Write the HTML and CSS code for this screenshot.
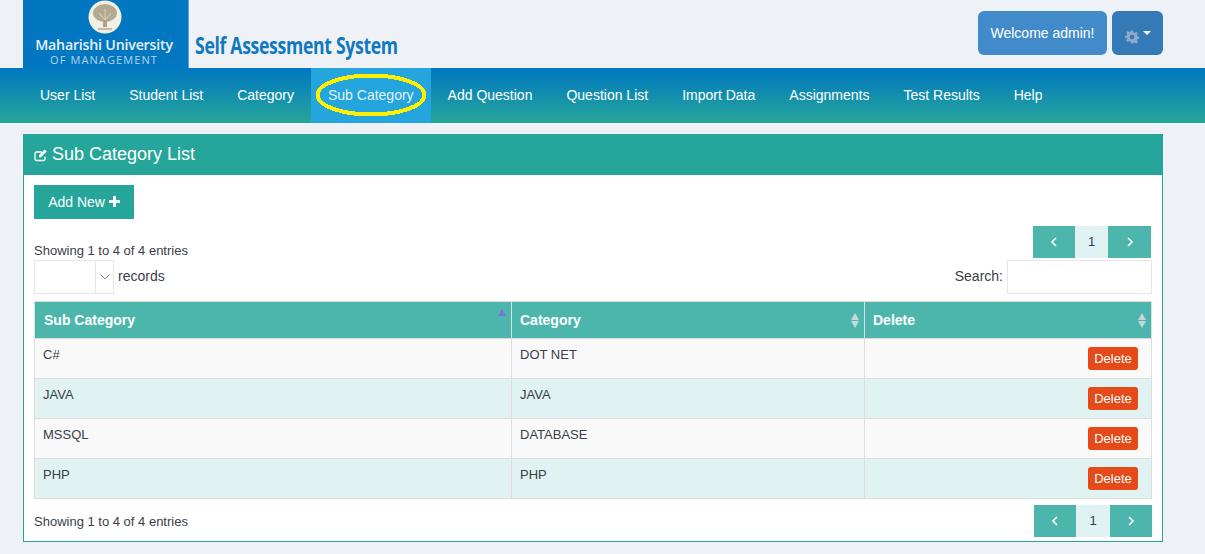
FILE: index.html
```html
<!DOCTYPE html>
<html lang="en">
<head>
<meta charset="utf-8">
<title>Sub Category List</title>
<link rel="stylesheet" href="styles.css">
</head>
<body>
<header class="topbar">
  <div class="brand">
    <div class="logo">
      <svg class="seal" width="34" height="34" viewBox="0 0 34 34">
        <circle cx="17" cy="17" r="16.5" fill="#f3efe4"/>
        <ellipse cx="17" cy="13" rx="12" ry="9" fill="#b3aa92"/>
        <path d="M15.5 19h3l.6 8h-4.200z" fill="#a89f88"/>
        <path d="M10 29h14" stroke="#b3aa92" stroke-width="1.500"/>
        <path d="M17 20 11 13M17 20l6-7M17 20V9" stroke="#e3decf" stroke-width=".8" fill="none"/>
      </svg>
      <div class="logo-name">Maharishi University</div>
      <div class="logo-sub">OF MANAGEMENT</div>
    </div>
    <div class="system-title">Self Assessment System</div>
  </div>
  <div class="user-actions">
    <div class="welcome">Welcome admin!</div>
    <div class="settings">
      <svg class="gear" width="14" height="14" viewBox="0 0 24 24"><path fill="#8fa9c6" d="M10 1h4l.6 3.200 2 .8 2.700-1.800 2.800 2.800-1.800 2.700.8 2 3.200.6v4l-3.200.6-.8 2 1.800 2.700-2.800 2.800-2.700-1.800-2 .8L14 23h-4l-.6-3.200-2-.8-2.700 1.800-2.800-2.800 1.800-2.700-.8-2L-.3 14v-4l3.200-.6.8-2-1.800-2.700 2.800-2.800 2.700 1.800 2-.8zM12 8a4 4 0 1 0 0 8 4 4 0 0 0 0-8z"/></svg>
      <span class="caret"></span>
    </div>
  </div>
</header>

<nav class="nav">
  <a class="nav-item">User List</a>
  <a class="nav-item">Student List</a>
  <a class="nav-item">Category</a>
  <a class="nav-item active">Sub Category
    <svg class="highlight" width="114" height="46" viewBox="0 0 114 46"><ellipse cx="57" cy="23" rx="53.500" ry="19.500" fill="none" stroke="#ffef00" stroke-width="4" shape-rendering="crispEdges"/></svg>
  </a>
  <a class="nav-item">Add Question</a>
  <a class="nav-item">Question List</a>
  <a class="nav-item">Import Data</a>
  <a class="nav-item">Assignments</a>
  <a class="nav-item">Test Results</a>
  <a class="nav-item">Help</a>
</nav>

<main class="panel">
  <h1 class="panel-head">
    <svg class="edit-icon" width="14" height="14" viewBox="0 0 14 14"><path d="M11 8.500V11a1.500 1.500 0 0 1-1.500 1.500h-7A1.500 1.500 0 0 1 1 11V5.500A1.500 1.500 0 0 1 2.500 4H8" fill="none" stroke="#fff" stroke-width="1.300"/><path d="M5 7.200 10.800 1.500l2 2L7 9.200H5z" fill="#fff"/></svg>
    Sub Category List
  </h1>
  <div class="panel-body">
    <button class="add-btn">Add New <svg width="11" height="11" viewBox="0 0 11 11"><path d="M4 0h3v4h4v3H7v4H4V7H0V4h4z" fill="#fff"/></svg></button>

    <div class="controls-top">
      <div class="info">Showing 1 to 4 of 4 entries</div>
      <div class="pager">
        <span class="pg-arrow"><svg width="8" height="10" viewBox="0 0 8 10"><path d="M6 1 2 5l4 4" fill="none" stroke="#fff" stroke-width="1.600"/></svg></span>
        <span class="pg-num">1</span>
        <span class="pg-arrow pg-wide"><svg width="8" height="10" viewBox="0 0 8 10"><path d="m2 1 4 4-4 4" fill="none" stroke="#fff" stroke-width="1.600"/></svg></span>
      </div>
    </div>

    <div class="controls-mid">
      <div class="length">
        <div class="select">
          <span class="select-val"></span>
          <span class="select-arrow"><svg width="10" height="6" viewBox="0 0 10 6"><path d="m.5 .5 4.500 4.500 4.500-4.500" fill="none" stroke="#888" stroke-width="1"/></svg></span>
        </div>
        <span class="field-label">records</span>
      </div>
      <label class="search"><span class="field-label">Search:</span> <span class="search-box"></span></label>
    </div>

    <table class="grid">
      <colgroup><col class="c1"><col class="c2"><col class="c3"></colgroup>
      <thead>
        <tr>
          <th class="th-first"><span class="th-in">Sub Category<span class="sort-asc"></span></span></th>
          <th><span class="th-in">Category<span class="sort"></span></span></th>
          <th><span class="th-in">Delete<span class="sort"></span></span></th>
        </tr>
      </thead>
      <tbody>
        <tr><td>C#</td><td>DOT NET</td><td class="act"><span class="del">Delete</span></td></tr>
        <tr><td>JAVA</td><td>JAVA</td><td class="act"><span class="del">Delete</span></td></tr>
        <tr><td>MSSQL</td><td>DATABASE</td><td class="act"><span class="del">Delete</span></td></tr>
        <tr><td>PHP</td><td>PHP</td><td class="act"><span class="del">Delete</span></td></tr>
      </tbody>
    </table>

    <div class="controls-bottom">
      <div class="info">Showing 1 to 4 of 4 entries</div>
      <div class="pager pager-b">
        <span class="pg-arrow"><svg width="8" height="10" viewBox="0 0 8 10"><path d="M6 1 2 5l4 4" fill="none" stroke="#fff" stroke-width="1.600"/></svg></span>
        <span class="pg-num">1</span>
        <span class="pg-arrow"><svg width="8" height="10" viewBox="0 0 8 10"><path d="m2 1 4 4-4 4" fill="none" stroke="#fff" stroke-width="1.600"/></svg></span>
      </div>
    </div>
  </div>
</main>
</body>
</html>
```

FILE: styles.css
```css
* { box-sizing: border-box; }
html, body { height: 100%; }
body {
  margin: 0;
  background: #eef2f7;
  color: #3a4048;
  font-family: "Liberation Sans", Arial, sans-serif;
  font-size: 14px;
  overflow: hidden;
}
.topbar {
  height: 68px;
  padding: 0 42px 0 23px;
  display: flex;
  justify-content: space-between;
}
.brand { display: flex; align-items: flex-start; }
.logo {
  width: 166px;
  height: 68px;
  background: #0077c0;
  border-right: 1px solid #5ba7d9;
  color: #e6f0f8;
  display: flex;
  flex-direction: column;
  align-items: center;
}
.seal { flex: none; margin-left: -1px; }
.logo-name { font: 600 14.200px/16px "Open Sans", sans-serif; margin-top: 3px; white-space: nowrap; letter-spacing: -.2px; margin-right: 3px; }
.logo-sub { font: 11px/13px "Open Sans", sans-serif; letter-spacing: 1.100px; color: #b5d5ec; white-space: nowrap; margin-right: 3px; }
.system-title {
  margin: 32px 0 0 6px;
  font: bold 24px/26px "Open Sans", sans-serif;
  color: #0f78bf;
  white-space: nowrap;
  transform: scaleX(.732);
  transform-origin: left center;
  letter-spacing: -.4px;
}
.user-actions { display: flex; gap: 5px; padding-top: 11px; }
.welcome {
  width: 129px;
  height: 44px;
  background: #428bca;
  border-radius: 6px;
  color: #fff;
  font-size: 14px;
  line-height: 44px;
  text-align: center;
}
.settings {
  width: 51px;
  height: 44px;
  background: #337ab7;
  border-radius: 6px;
  display: flex;
  align-items: center;
  justify-content: center;
  gap: 4px;
}
.gear { margin-top: 7px; }
.caret {
  width: 0;
  height: 0;
  margin-top: -1px;
  border-top: 4px solid #fff;
  border-left: 4px solid transparent;
  border-right: 4px solid transparent;
}
.nav {
  height: 55px;
  padding: 0 23px;
  display: flex;
  background: linear-gradient(#0077c0, #26a69a);
}
.nav-item {
  position: relative;
  padding: 0 17px;
  line-height: 55px;
  color: #fff;
  white-space: nowrap;
}
.nav-item.active { background: #25a5dd; color: #e3f1fb; }
.highlight { position: absolute; left: 3px; top: 4px; }
.panel {
  width: 1140px;
  height: 408px;
  margin: 11px 0 0 23px;
  background: #fff;
  border: 1px solid #26a69a;
  border-top: 0;
}
.panel-head {
  height: 41px;
  margin: 0 -1px;
  padding: 0 0 0 11px;
  background: #26a69a;
  color: #fff;
  font-size: 18px;
  font-weight: 400;
  line-height: 39px;
  display: flex;
  align-items: center;
  gap: 4px;
}
.edit-icon { margin-top: 1px; }
.panel-body { padding: 10px 10px 0; }
.add-btn {
  display: block;
  width: 100px;
  height: 34px;
  border: 0;
  padding: 0;
  background: #26a69a;
  color: #fff;
  font: 14px "Liberation Sans", Arial, sans-serif;
}
.controls-top {
  height: 34px;
  margin-top: 7px;
  padding-right: 1px;
  display: flex;
  justify-content: space-between;
}
.info { font-size: 13px; line-height: 16px; }
.controls-top .info { padding-top: 17px; }
.pager { display: flex; height: 32px; }
.pg-arrow {
  width: 42px;
  background: #4db6ac;
  display: flex;
  align-items: center;
  justify-content: center;
}
.pg-wide { width: 43px; }
.pg-num {
  width: 33px;
  background: #e0f2f1;
  color: #2a3a6a;
  font-size: 13px;
  line-height: 32px;
  text-align: center;
}
.pager-b .pg-num { width: 34px; color: #3a4048; }
.controls-mid {
  height: 41px;
  display: flex;
  justify-content: space-between;
  align-items: flex-start;
}
.length { display: flex; align-items: center; gap: 4px; height: 34px; }
.field-label { font-size: 14px; margin-top: -2px; }
.select {
  width: 80px;
  height: 34px;
  border: 1px solid #e4e6e8;
  display: flex;
  justify-content: flex-end;
}
.select-arrow {
  width: 18px;
  border-left: 1px solid #e4e6e8;
  display: flex;
  align-items: center;
  justify-content: center;
}
.search { display: flex; align-items: center; gap: 4px; }
.search-box {
  width: 145px;
  height: 34px;
  border: 1px solid #e4e6e8;
  background: #fff;
}
.grid {
  width: 1118px;
  height: 198px;
  border-collapse: collapse;
  table-layout: fixed;
  font-size: 13px;
}
.c1 { width: 477px; }
.c2 { width: 353px; }
.grid th, .grid td { border: 1px solid #dddddd; }
.grid th {
  height: 37px;
  padding: 0 9px 0 8px;
  background: #4db6ac;
  color: #fff;
  font-size: 14px;
  font-weight: bold;
  text-align: left;
}
.grid th.th-first { padding-left: 9px; }
.grid td { height: 40px; padding: 0 8px 8px; }
.grid tbody tr:nth-child(odd) { background: #f9f9f9; }
.grid tbody tr:nth-child(even) { background: #e0f2f1; }
.th-in { position: relative; display: block; }
.sort::before, .sort::after, .sort-asc::before {
  content: "";
  position: absolute;
  width: 0;
  height: 0;
  right: -4px;
  border-left: 4px solid transparent;
  border-right: 4px solid transparent;
}
.sort::before { top: 1px; border-bottom: 7px solid #c5d8d6; }
.sort::after { top: 9px; border-top: 7px solid #c5d8d6; }
.sort-asc::before { top: -3px; border-bottom: 7px solid #7a74d6; }
.grid td.act { padding: 0 13px 0 0; text-align: right; }
.del {
  display: inline-block;
  width: 50px;
  height: 23px;
  background: #e64a19;
  border-radius: 3px;
  color: #fff;
  font-size: 13px;
  line-height: 23px;
  text-align: center;
}
.controls-bottom {
  margin-top: 6px;
  display: flex;
  justify-content: space-between;
}
.controls-bottom .info { padding-top: 9px; }
```
